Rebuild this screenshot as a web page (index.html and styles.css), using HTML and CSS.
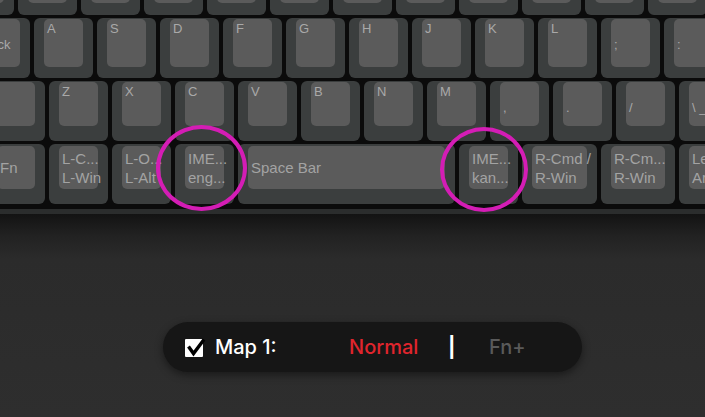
FILE: index.html
```
<!DOCTYPE html>
<html lang="en">
	<head>
		<meta charset="UTF-8" />
		<meta name="viewport" content="width=device-width, initial-scale=1.0" />
		<title>Key Map</title>
		<link rel="stylesheet" href="styles.css">
	</head>
	<body>
		<div class="keyboard">
			<div class="row row1">
				<div class="key tab"><div class="cap"></div></div>
				<div class="key"><div class="cap"></div></div>
				<div class="key"><div class="cap"></div></div>
				<div class="key"><div class="cap"></div></div>
				<div class="key"><div class="cap"></div></div>
				<div class="key"><div class="cap"></div></div>
				<div class="key"><div class="cap"></div></div>
				<div class="key"><div class="cap"></div></div>
				<div class="key"><div class="cap"></div></div>
				<div class="key"><div class="cap"></div></div>
				<div class="key"><div class="cap"></div></div>
				<div class="key"><div class="cap"></div></div>
			</div>
			<div class="row row2">
				<div class="key caps"><div class="cap low">Caps Lock</div></div>
				<div class="key"><div class="cap">A</div></div>
				<div class="key"><div class="cap">S</div></div>
				<div class="key"><div class="cap">D</div></div>
				<div class="key"><div class="cap">F</div></div>
				<div class="key"><div class="cap">G</div></div>
				<div class="key"><div class="cap">H</div></div>
				<div class="key"><div class="cap">J</div></div>
				<div class="key"><div class="cap">K</div></div>
				<div class="key"><div class="cap">L</div></div>
				<div class="key"><div class="cap low">;</div></div>
				<div class="key"><div class="cap low">:</div></div>
			</div>
			<div class="row row3">
				<div class="key lshift"><div class="cap"></div></div>
				<div class="key"><div class="cap">Z</div></div>
				<div class="key"><div class="cap">X</div></div>
				<div class="key"><div class="cap">C</div></div>
				<div class="key"><div class="cap">V</div></div>
				<div class="key"><div class="cap">B</div></div>
				<div class="key"><div class="cap">N</div></div>
				<div class="key"><div class="cap">M</div></div>
				<div class="key"><div class="cap low">,</div></div>
				<div class="key"><div class="cap low">.</div></div>
				<div class="key"><div class="cap low">/</div></div>
				<div class="key"><div class="cap low">\ _</div></div>
			</div>
			<div class="row row4">
				<div class="key fn"><div class="cap">Fn</div></div>
				<div class="key"><div class="cap">L-C...<br>L-Win</div></div>
				<div class="key"><div class="cap">L-O...<br>L-Alt</div></div>
				<div class="key"><div class="cap">IME...<br>eng...</div></div>
				<div class="key space"><div class="cap">Space Bar</div></div>
				<div class="key"><div class="cap">IME...<br>kan...</div></div>
				<div class="key wide"><div class="cap">R-Cmd /<br>R-Win</div></div>
				<div class="key wide2"><div class="cap">R-Cm...<br>R-Win</div></div>
				<div class="key"><div class="cap">Le...<br>Ar...</div></div>
			</div>

			<div class="ring ring-left"></div>
			<div class="ring ring-right"></div>
		</div>

		<div class="desk">
			<div class="mapbar">
				<svg class="check" width="21" height="19" viewBox="0 0 21 19">
					<rect x="0" y="1" width="18" height="18" rx="1" fill="#ffffff" />
					<path d="M3.5 8.5 L8.5 15.5 L19 1.5" fill="none" stroke="#000000" stroke-width="3.4" />
				</svg>
				<span class="map-label">Map 1:</span>
				<span class="mode mode-normal">Normal</span>
				<span class="divider">|</span>
				<span class="mode mode-fn">Fn+</span>
			</div>
		</div>
	</body>
</html>
```

FILE: styles.css
```
html,
body {
	margin: 0;
	padding: 0;
}

body {
	width: 705px;
	height: 417px;
	overflow: hidden;
	background-color: #2e2e2e;
	font-family: "Liberation Sans", Arial, sans-serif;
}

.keyboard {
	position: relative;
	margin-top: -45px;
	display: flex;
	flex-direction: column;
	gap: 3px;
	padding-bottom: 5px;
	background-color: #0b0b0b;
	border-bottom: 5px solid #2b2d2d;
}

.row {
	display: flex;
	gap: 4px;
	height: 60px;
}

.key {
	flex: none;
	width: 59px;
	height: 60px;
	box-sizing: border-box;
	background-color: #3b3e3e;
	border-radius: 6px;
	padding: 1px 10px 12px;
}

.cap {
	height: 100%;
	box-sizing: border-box;
	background-color: #5b5b5b;
	border-radius: 5px;
	padding: 0 3px;
	color: #a9a9a9;
	font-size: 13px;
	line-height: 19px;
	white-space: nowrap;
}

.cap.low {
	padding-top: 16px;
}

/* row specific cap heights */
.row1 .key {
	padding-bottom: 12px;
}

.row2 .key {
	padding-bottom: 11px;
}

.row3 .key {
	padding-bottom: 15px;
}

.row4 .key {
	padding: 2px 10px 15px;
}

.row4 .cap {
	display: flex;
	flex-direction: column;
	justify-content: center;
	font-size: 15px;
	color: #a3a3a3;
}

.tab {
	width: 80px;
	margin-left: -66px;
}

.caps {
	width: 94px;
	margin-left: -64px;
}

.lshift {
	width: 100px;
	margin-left: -55px;
}

.fn {
	width: 58px;
	margin-left: -13px;
}

.space {
	width: 217px;
}

.wide {
	width: 75px;
}

.wide2 {
	width: 74px;
}

.ring {
	position: absolute;
	box-sizing: border-box;
	border: 4px solid #d41db5;
	border-radius: 50%;
}

.ring-left {
	left: 156px;
	top: 170px;
	width: 91px;
	height: 86px;
}

.ring-right {
	left: 440px;
	top: 172px;
	width: 88px;
	height: 85px;
}

.desk {
	height: 203px;
	box-sizing: border-box;
	padding: 108px 0 0 163px;
	background: linear-gradient(#131313 0, #222222 22px, #2b2b2b 45px, #2e2e2e 100%);
}

.mapbar {
	width: 419px;
	height: 50px;
	box-sizing: border-box;
	display: flex;
	align-items: center;
	padding-left: 22px;
	background-color: #161616;
	border-radius: 25px;
	box-shadow: 0 3px 8px rgba(0, 0, 0, 0.45);
	font-family: Inter, "Liberation Sans", sans-serif;
	font-size: 20px;
	font-weight: 500;
}

.check {
	flex: none;
	display: block;
}

.map-label {
	width: 134px;
	margin-left: 9px;
	color: #ffffff;
}

.mode-normal {
	width: 99px;
	color: #e0252d;
}

.divider {
	width: 41px;
	color: #ffffff;
	font-weight: 700;
}

.mode-fn {
	color: #5a5a5a;
}
```
